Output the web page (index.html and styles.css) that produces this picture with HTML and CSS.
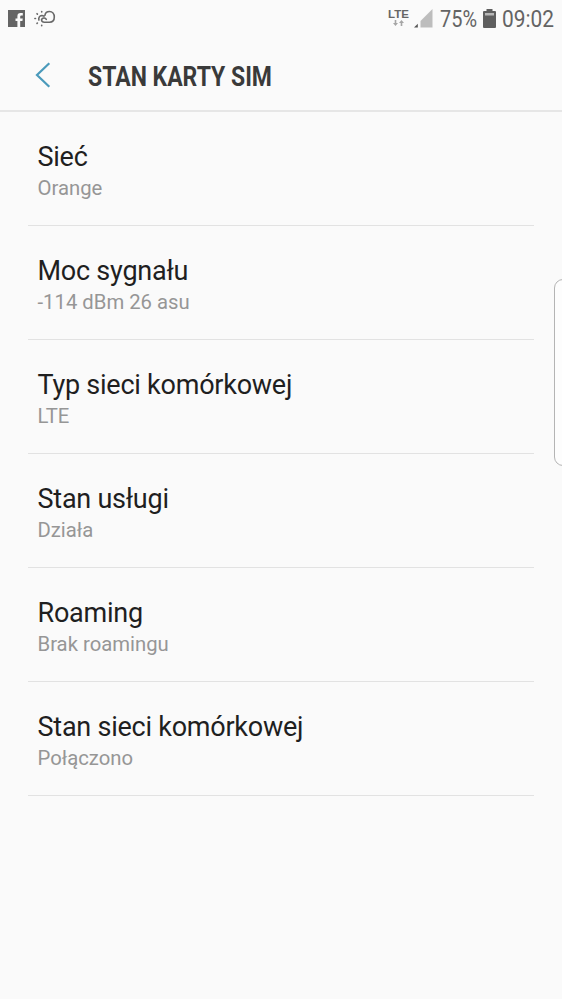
FILE: index.html
```html
<!DOCTYPE html>
<html lang="pl">
<head>
<meta charset="utf-8">
<title>Stan karty SIM</title>
<link rel="stylesheet" href="styles.css">
</head>
<body>
<header class="statusbar">
  <svg class="ic-facebook" width="17" height="17" viewBox="0 0 17 17"><path fill="#646464" d="M0 0H17V17H12.200V11H14.400L14.800 8.400H12.200V6.600Q12.200 5.500 13.300 5.500H14.800V3H12.500Q9.400 3 9.400 6.300V8.400H7.500V11H9.400V17H0Z"/></svg>
  <svg class="ic-weather" width="22" height="19" viewBox="0 0 22 19" fill="none" stroke="#686868" stroke-width="1.600" stroke-linecap="round" stroke-linejoin="round"><path d="M4.900 11C4.300 8.500 5.700 6.600 7.800 6.500C8.800 6.500 9.500 6.800 10 7.300M12.300 10.400C11.300 8.800 9.300 8.500 8.200 9.600C6.800 11 7.700 13.200 10 13.200H15.500C18.500 13.200 20.300 11 20.300 8C20.300 4.800 18.300 2.500 15.500 2.500C13 2.500 11.300 4 10.900 6.300"/><path d="M.9 9.500h.6M3 4.700l.4.400M7.700 2.500v.5M3 14.400l.4-.4M7.700 16.200v.5"/></svg>
  <div class="status-right">
    <div class="network">
      <span class="lte">LTE</span>
      <svg class="arrows" width="11" height="6" viewBox="0 0 11 6"><path fill="#a6a6a6" d="M1.700 0h1.600v3h1.700L2.500 6 0 3h1.700zM7.700 6h1.600V3H11L8.500 0 6 3h1.700z"/></svg>
    </div>
    <svg class="ic-signal" width="19" height="19" viewBox="0 0 19 19"><path fill="#bdbdbd" d="M18.500 0V18.500H6.500V12Z"/><path fill="#555" d="M3.800 14.700V18.500H0Z"/></svg>
    <svg class="percent" width="38" height="34"><text class="status-text" x="0" y="22" textLength="37" lengthAdjust="spacingAndGlyphs">75%</text></svg>
    <svg class="ic-battery" width="13" height="19" viewBox="0 0 13 19"><path fill="#5f5f5f" d="M3.500 0h6v2H12q1 0 1 1v15q0 1-1 1H1q-1 0-1-1V3q0-1 1-1h2.500z"/><path fill="#b8b8b8" d="M2 4h9v2.500H2z"/></svg>
    <svg class="clock" width="53" height="34"><text class="status-text" x="0" y="22" textLength="52" lengthAdjust="spacingAndGlyphs">09:02</text></svg>
  </div>
</header>
<div class="titlebar">
  <svg class="back" width="16" height="26" viewBox="0 0 16 26"><path fill="none" stroke="#4a9abb" stroke-width="2.200" d="M14.300 1.300 2 13 14.300 24.700"/></svg>
  <svg class="heading" width="190" height="40"><text class="title-text" x="0" y="30.600" textLength="184" lengthAdjust="spacingAndGlyphs">STAN KARTY SIM</text></svg>
</div>
<main class="list">
  <div class="item"><div class="name">Sieć</div><div class="value">Orange</div></div>
  <div class="item"><div class="name">Moc sygnału</div><div class="value">-114 dBm 26 asu</div></div>
  <div class="item"><div class="name">Typ sieci komórkowej</div><div class="value">LTE</div></div>
  <div class="item"><div class="name">Stan usługi</div><div class="value">Działa</div></div>
  <div class="item"><div class="name">Roaming</div><div class="value">Brak roamingu</div></div>
  <div class="item"><div class="name">Stan sieci komórkowej</div><div class="value">Połączono</div></div>
</main>
<div class="edge-handle"></div>
</body>
</html>
```
FILE: styles.css
```css
* { box-sizing: border-box; }
body {
  margin: 0;
  height: 999px;
  position: relative;
  overflow: hidden;
  background: #fafafa;
  font-family: Roboto, "Liberation Sans", sans-serif;
}
svg { display: block; flex: none; overflow: visible; }
.statusbar {
  display: flex;
  align-items: flex-start;
  height: 40px;
  padding: 0 8px;
}
.ic-facebook { margin-top: 10px; }
.ic-weather { margin: 9px 0 0 9px; }
.status-right { display: flex; margin-left: auto; }
.network {
  display: flex;
  flex-direction: column;
  align-items: center;
  width: 21px;
  margin: 8px 5px 0 0;
}
.lte {
  font-family: "Liberation Sans", sans-serif;
  font-size: 11.5px;
  line-height: 12px;
  font-weight: 700;
  color: #666;
}
.ic-signal { margin: 9px 7px 0 0; }
.percent { margin: 5px 5px 0 0; }
.ic-battery { margin: 9px 6px 0 0; }
.clock { margin: 5px -1px 0 0; }
.status-text { font-size: 24px; fill: #646464; }
.titlebar {
  display: flex;
  align-items: center;
  height: 72px;
  padding: 0 35px;
  border-bottom: 2px solid #e6e6e6;
}
.heading { margin-left: 37px; }
.title-text { font-size: 27px; font-weight: 700; fill: #3a3a3a; }
.list { padding: 0 28px; }
.item {
  height: 114px;
  padding: 29px 9.5px 0;
  border-bottom: 1px solid #e2e2e2;
}
.name { font-size: 27px; line-height: 32px; letter-spacing: -0.24px; color: #1f1f1f; white-space: nowrap; }
.value { font-size: 20.3px; line-height: 31px; color: #969696; }
.edge-handle {
  position: absolute;
  top: 279px;
  right: -10px;
  width: 18px;
  height: 187px;
  border: 1px solid #b4b4b4;
  border-radius: 9px;
  background: #fdfdfd;
}
```
